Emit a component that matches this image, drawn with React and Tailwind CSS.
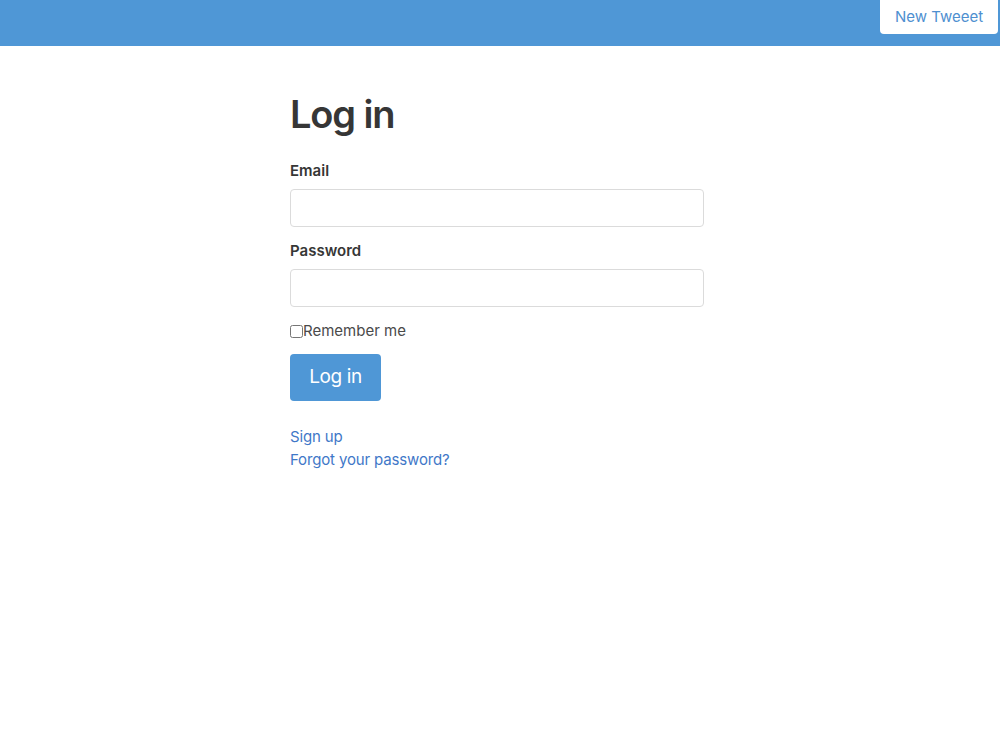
export default function App() {
  return (
    <div className="min-h-[750px] bg-white text-[#363636] font-['Inter','Liberation_Sans',sans-serif]">
      <header className="h-[46px] bg-[#4f97d6] flex justify-end pr-[2px]">
        <a
          href="#"
          className="h-[34px] w-[118px] bg-white rounded-b-[4px] flex items-center justify-center text-[15px] text-[#4e8fd0]"
        >
          New Tweeet
        </a>
      </header>

      <main className="w-[414px] ml-[290px] pt-[45px]">
        <h1 className="text-[38px] font-semibold leading-[46px] tracking-[-0.03em] text-[#363636]">Log in</h1>

        <form className="mt-[22px]" onSubmit={(e) => e.preventDefault()}>
          <label className="block text-[15px] font-semibold leading-[24px]">Email</label>
          <input
            type="email"
            className="mt-[6px] block w-full h-[38px] rounded-[4px] border border-[#dbdbdb] px-3 outline-none"
          />

          <label className="block mt-[12px] text-[15px] font-semibold leading-[24px]">Password</label>
          <input
            type="password"
            className="mt-[6px] block w-full h-[38px] rounded-[4px] border border-[#dbdbdb] px-3 outline-none"
          />

          <div className="mt-[12px] flex items-center text-[15px] leading-[24px] text-[#4a4a4a]">
            <input type="checkbox" className="w-[13px] h-[13px] m-0" />
            <span>Remember me</span>
          </div>

          <button
            type="submit"
            className="mt-[11px] w-[91px] h-[47px] rounded-[4px] bg-[#4f97d6] text-white text-[19px] tracking-[-0.02em]"
          >
            Log in
          </button>
        </form>

        <div className="mt-[24px] flex flex-col text-[15px] leading-[23px] tracking-[-0.01em] text-[#3f78c8]">
          <a href="#" className="self-start">Sign up</a>
          <a href="#" className="self-start">Forgot your password?</a>
        </div>
      </main>
    </div>
  );
}
